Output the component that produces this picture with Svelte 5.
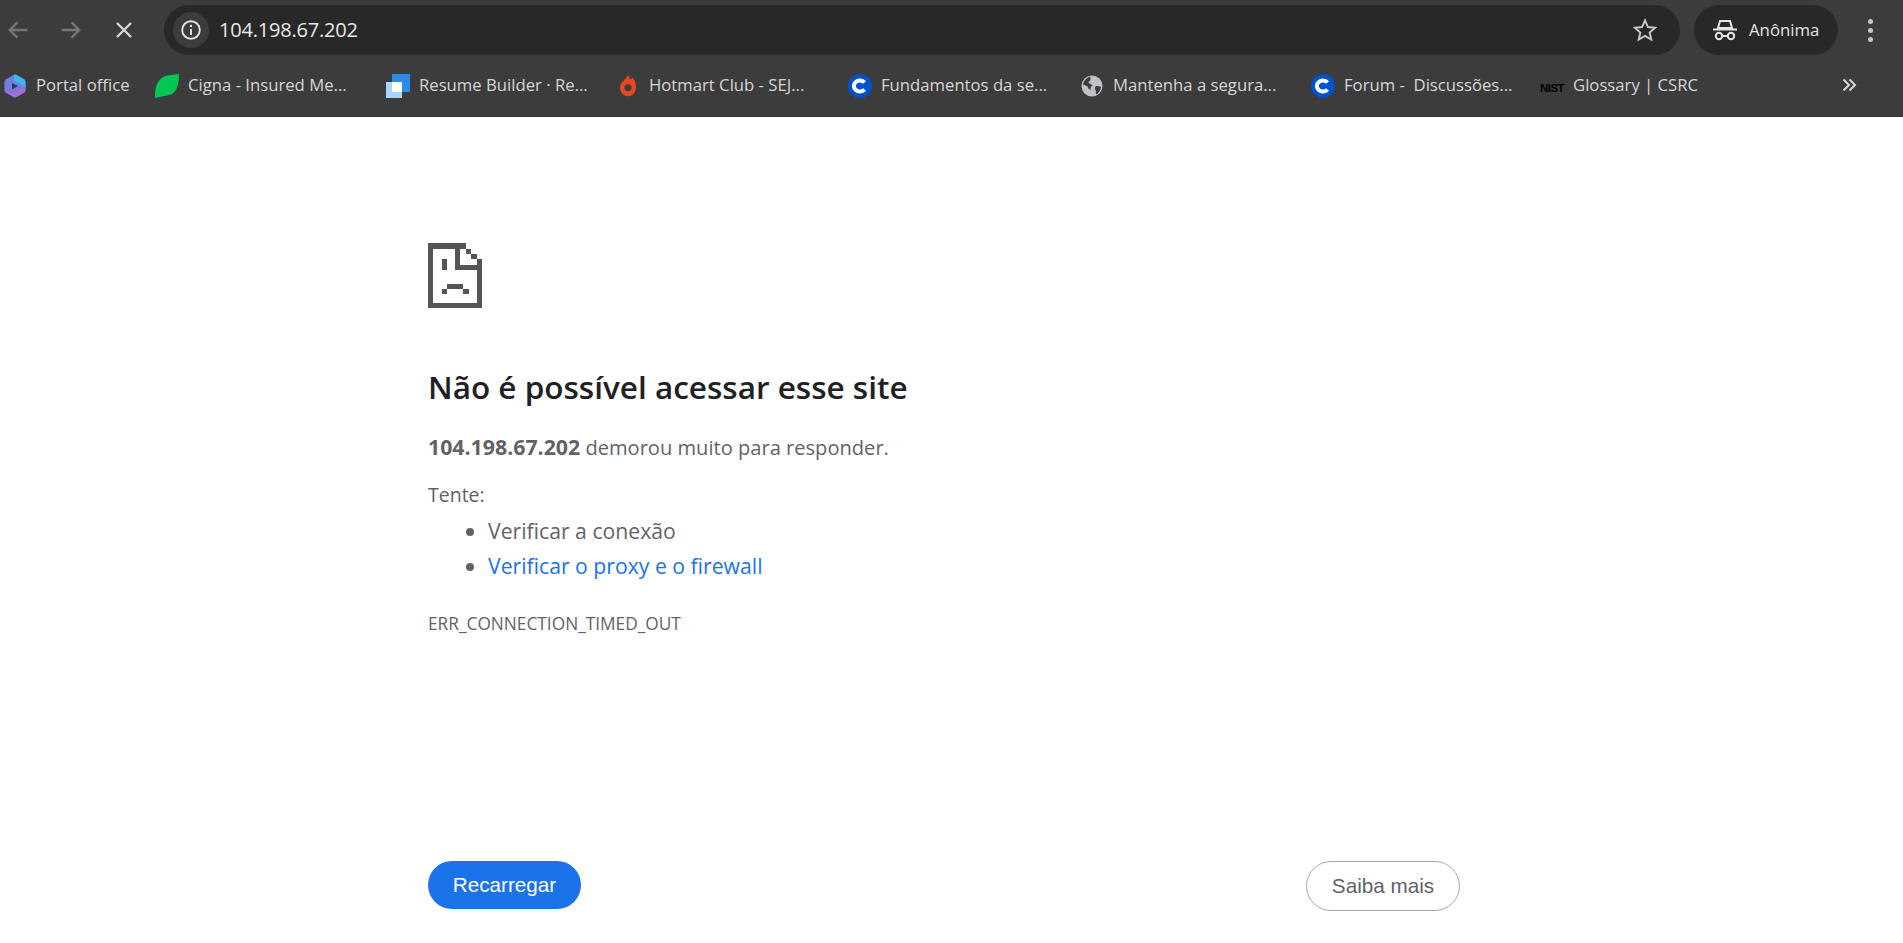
<script>
  const bookmarks = [
    { icon: 'office', label: 'Portal office', width: 152 },
    { icon: 'leaf', label: 'Cigna - Insured Me...', width: 231 },
    { icon: 'resume', label: 'Resume Builder · Re...', width: 230 },
    { icon: 'flame', label: 'Hotmart Club - SEJ...', width: 232 },
    { icon: 'c', label: 'Fundamentos da se...', width: 232 },
    { icon: 'globe', label: 'Mantenha a segura...', width: 231 },
    { icon: 'c', label: 'Forum -  Discussões...', width: 229 },
    { icon: 'nist', label: 'Glossary | CSRC', width: 170 }
  ];
</script>

<div class="page">
  <header class="chrome">
    <div class="toolbar">
      <div class="nav">
        <svg class="navicon" viewBox="0 0 24 24"><path d="M20 12H5M11.5 5.5 5 12l6.5 6.5" fill="none" stroke="#767676" stroke-width="2"/></svg>
        <svg class="navicon" viewBox="0 0 24 24"><path d="M4 12h15M12.500 5.500 19 12l-6.500 6.500" fill="none" stroke="#767676" stroke-width="2"/></svg>
        <svg class="navicon" viewBox="0 0 24 24"><path d="M6 6l12 12M18 6 6 18" fill="none" stroke="#d8d8d8" stroke-width="2"/></svg>
      </div>
      <div class="omnibox">
        <span class="chip">
          <svg viewBox="0 0 20 20" width="22" height="22"><circle cx="10" cy="10" r="8" fill="none" stroke="#e3e3e3" stroke-width="1.700"/><path d="M10 9v5.500" stroke="#e3e3e3" stroke-width="1.800"/><circle cx="10" cy="6.300" r="1.100" fill="#e3e3e3"/></svg>
        </span>
        <span class="url">104.198.67.202</span>
        <svg class="star" viewBox="0 0 24 24" width="26" height="26"><path d="M12 3.200l2.700 6.100 6.600.6-5 4.400 1.500 6.500L12 17.400l-5.800 3.400 1.500-6.500-5-4.400 6.600-.6z" fill="none" stroke="#c7c7c7" stroke-width="1.800" stroke-linejoin="miter"/></svg>
      </div>
      <div class="incognito">
        <svg viewBox="0 0 26 24" width="26" height="24"><path d="M8 3h10l2 7H6z" fill="none" stroke="#e3e3e3" stroke-width="2"/><path d="M1 11.500h24" stroke="#e3e3e3" stroke-width="2"/><circle cx="7" cy="18" r="3.200" fill="none" stroke="#e3e3e3" stroke-width="2"/><circle cx="19" cy="18" r="3.200" fill="none" stroke="#e3e3e3" stroke-width="2"/><path d="M10 18h6" stroke="#e3e3e3" stroke-width="2"/></svg>
        <span>Anônima</span>
      </div>
      <div class="kebab"><i></i><i></i><i></i></div>
    </div>
    <nav class="bookmarks">
      {#each bookmarks as b}
        <div class="bookmark" style="width: {b.width}px">
          <span class="favicon">
            {#if b.icon === 'office'}
              <svg viewBox="0 0 22 24" width="22" height="24">
                <path d="M10 .8 2 5.300q-1.500 1-1.500 2.700v8q0 1.700 1.500 2.700l8 4.500q1 .5 2 0l8-4.500q1.500-1 1.500-2.700V8q0-1.700-1.500-2.700L12 .8q-1-.5-2 0z" fill="#6f7fdc"/>
                <path d="M10 .8q1-.5 2 0l8 4.500q1.500 1 1.500 2.700v5L15 9.500 10 7z" fill="#3fb7ee"/>
                <path d="M.5 15v1q0 1.700 1.500 2.700l8 4.500q1 .5 2 0l8-4.500q1.500-1 1.500-2.700v-3L15 15l-7 4z" fill="#a66bd8"/>
                <path d="M8 9l6 3-6 3.500z" fill="#34345c"/>
              </svg>
            {:else if b.icon === 'leaf'}
              <svg viewBox="0 0 24 24" width="24" height="24"><path d="M24 0C24 14 20 20 14 21L0 24C0 14 1 8 8 3 12 1 18 1 24 0z" fill="#00c853"/></svg>
            {:else if b.icon === 'resume'}
              <svg viewBox="0 0 24 24" width="24" height="24"><rect x="6" y="0" width="18" height="18" fill="#2b8bef"/><rect x="0" y="8" width="16" height="16" fill="#a8d5fd"/><path d="M6 8h10v10H6z" fill="#fff"/></svg>
            {:else if b.icon === 'flame'}
              <svg viewBox="0 0 18 24" width="16" height="23"><path fill-rule="evenodd" d="M9 0c1 3 2 4 3 5 1-.500 1.500-1 2-2 3 3 4 7 4 11 0 6-4 10-9 10s-9-4-9-10C0 8 7 6 9 0zM9 10.500a4 4 0 1 0 0 8 4 4 0 0 0 0-8z" fill="#e8481f"/></svg>
            {:else if b.icon === 'c'}
              <svg viewBox="0 0 24 24" width="24" height="24"><circle cx="12" cy="12" r="12" fill="#0052cc"/><path d="M16.500 8.500a6 5.500 0 1 0 0 7" fill="none" stroke="#fff" stroke-width="4"/></svg>
            {:else if b.icon === 'globe'}
              <svg viewBox="0 0 22 22" width="22" height="22"><circle cx="11" cy="11" r="10.500" fill="#bdc1c6"/><path d="M9 1.500C5 3 2.500 6 2 9.500c2 .5 3.500 1 5 2.500 0 2 1.500 2 2.500 3 0-3 .5-4 2.500-5-2-1-4-1-4.500-3C8.500 6 10.500 5 9 1.500zM20 12c-2-.8-4-1.500-5.500-.5-1 1.500-.5 3 .5 4.500-.5 2 0 3 .5 3.500 2.500-1.500 4-4.500 4.500-7.500z" fill="#3c3c3c"/></svg>
            {:else}
              <span class="nist">NIST</span>
            {/if}
          </span>
          <span class="label">{b.label}</span>
        </div>
      {/each}
      <svg class="more" viewBox="0 0 16 16" width="16" height="16"><path d="M2.500 2.500 8 8l-5.500 5.500M8.500 2.500 14 8l-5.500 5.500" fill="none" stroke="#d8d8d8" stroke-width="2"/></svg>
    </nav>
  </header>

  <main class="content">
    <svg class="sad" viewBox="0 0 10 12" width="54" height="65" shape-rendering="crispEdges">
      <g fill="#555555">
        <rect x="0" y="0" width="1" height="12"/>
        <rect x="0" y="0" width="7" height="1"/>
        <rect x="5" y="1" width="1" height="4"/>
        <rect x="5" y="4" width="5" height="1"/>
        <rect x="7" y="1" width="1" height="1"/>
        <rect x="8" y="2" width="1" height="1"/>
        <rect x="9" y="3" width="1" height="9"/>
        <rect x="0" y="11" width="10" height="1"/>
        <rect x="2.500" y="3" width="1" height="2"/>
        <rect x="3.500" y="7.500" width="3" height="1"/>
        <rect x="2.500" y="8.500" width="1" height="1"/>
        <rect x="6.500" y="8.500" width="1" height="1"/>
      </g>
    </svg>
    <h1>Não é possível acessar esse site</h1>
    <p class="desc"><strong>104.198.67.202</strong> demorou muito para responder.</p>
    <p class="try">Tente:</p>
    <ul>
      <li>Verificar a conexão</li>
      <li><a href="#proxy">Verificar o proxy e o firewall</a></li>
    </ul>
    <div class="code">ERR_CONNECTION_TIMED_OUT</div>
  </main>

  <footer class="actions">
    <button class="primary">Recarregar</button>
    <button class="secondary">Saiba mais</button>
  </footer>
</div>

<style>
  :global(body) {
    margin: 0;
    background: #fff;
    overflow: hidden;
  }
  .page {
    height: 943px;
    display: flex;
    flex-direction: column;
    font-family: "Open Sans", "Noto Sans", sans-serif;
  }
  .chrome {
    height: 117px;
    flex: none;
    background: #3c3c3c;
    box-sizing: border-box;
    padding-top: 5px;
    border-bottom: 1px solid #333;
  }
  .toolbar {
    height: 50px;
    display: flex;
    align-items: center;
  }
  .nav {
    width: 164px;
    flex: none;
    display: flex;
    align-items: center;
    gap: 25px;
    padding-left: 4px;
    box-sizing: border-box;
  }
  .navicon {
    width: 28px;
    height: 28px;
    flex: none;
  }
  .omnibox {
    width: 1516px;
    height: 50px;
    flex: none;
    background: #282828;
    border-radius: 25px;
    display: flex;
    align-items: center;
    padding: 0 22px 0 9px;
    box-sizing: border-box;
  }
  .chip {
    width: 36px;
    height: 36px;
    border-radius: 50%;
    background: #3c3c3c;
    display: flex;
    align-items: center;
    justify-content: center;
    flex: none;
  }
  .url {
    margin-left: 10px;
    margin-top: -1px;
    flex: 1;
    color: #e8e8e8;
    font-size: 20px;
    letter-spacing: -0.2px;
  }
  .star {
    flex: none;
  }
  .incognito {
    margin-left: 14px;
    width: 144px;
    height: 50px;
    flex: none;
    background: #282828;
    border-radius: 25px;
    color: #e3e3e3;
    font-size: 16.800px;
    display: flex;
    align-items: center;
    gap: 11px;
    padding-left: 18px;
    box-sizing: border-box;
  }
  .incognito span {
    margin-top: -1px;
  }
  .kebab {
    margin-left: 30px;
    display: flex;
    flex-direction: column;
    gap: 4px;
    flex: none;
  }
  .kebab i {
    width: 5px;
    height: 5px;
    border-radius: 50%;
    background: #c7c7c7;
    display: block;
  }
  .bookmarks {
    height: 61px;
    padding-left: 3px;
    display: flex;
    align-items: center;
    position: relative;
  }
  .bookmark {
    display: flex;
    align-items: center;
    gap: 9px;
    flex: none;
  }
  .favicon {
    width: 24px;
    height: 24px;
    display: flex;
    align-items: center;
    justify-content: center;
    flex: none;
  }
  .nist {
    font: 900 11.500px "Liberation Sans", sans-serif;
    letter-spacing: -0.5px;
    color: #000;
    margin-top: 4px;
  }
  .label {
    color: #d6d6d6;
    font-size: 16.700px;
    white-space: pre;
    margin-top: -2px;
  }
  .more {
    position: absolute;
    left: 1841px;
    top: 22px;
  }
  .content {
    flex: 1;
    padding: 126px 0 0 428px;
    color: #5f6368;
    font-size: 20.500px;
  }
  .sad {
    display: block;
  }
  h1 {
    margin: 59px 0 0;
    color: #202124;
    font-size: 31.500px;
    font-weight: 600;
    line-height: 40px;
  }
  .desc {
    margin: 25px 0 0;
    line-height: 30px;
    font-size: 20.100px;
  }
  .desc strong {
    font-size: 21.300px;
  }
  .try {
    margin: 17px 0 0;
    line-height: 30px;
    font-size: 19.500px;
  }
  ul {
    margin: 3px 0 0;
    padding: 0 0 0 60px;
    font-size: 21.200px;
  }
  li {
    line-height: 35px;
  }
  a {
    color: #1a73e8;
    text-decoration: none;
  }
  .code {
    margin-top: 29px;
    font-size: 17.300px;
    line-height: 24px;
  }
  .actions {
    flex: none;
    display: flex;
    justify-content: space-between;
    width: 1032px;
    margin-left: 428px;
    padding-bottom: 32px;
    align-items: flex-start;
  }
  button {
    font-family: "Liberation Sans", sans-serif;
    font-size: 20.700px;
    border-radius: 25px;
    height: 50px;
    width: 154px;
    box-sizing: border-box;
    cursor: pointer;
    padding: 0;
  }
  .primary {
    background: #1a73e8;
    color: #fff;
    border: none;
    height: 48px;
    width: 153px;
  }
  .secondary {
    background: #fff;
    color: #5f6368;
    border: 1px solid #a8a8a8;
  }
</style>
